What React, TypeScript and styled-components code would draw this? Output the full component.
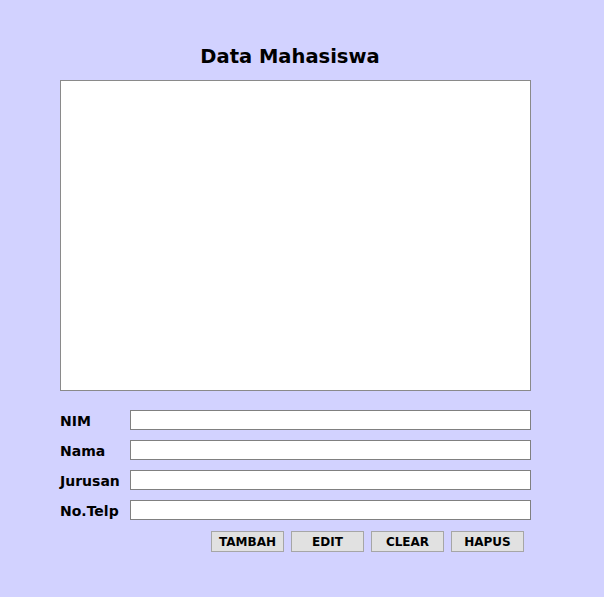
import React from "react";
import styled, { createGlobalStyle } from "styled-components";

const Global = createGlobalStyle`
  html, body { margin: 0; padding: 0; background: #d2d2ff; }
  body { font-family: "DejaVu Sans", Verdana, sans-serif; }
`;

const Page = styled.div`
  width: 604px;
  height: 597px;
  background: #d2d2ff;
  padding: 42px 0 0 60px;
  box-sizing: border-box;
`;

const Title = styled.h1`
  margin: 0;
  width: 460px;
  text-align: center;
  font-size: 19.5px;
  font-weight: bold;
  color: #000;
  line-height: 29px;
  height: 38px;
`;

const TableBox = styled.div`
  width: 471px;
  height: 311px;
  box-sizing: border-box;
  background: #fff;
  border: 1px solid #8a8a8a;
`;

const Form = styled.div`
  display: flex;
  flex-direction: column;
  gap: 10px;
  margin-top: 19px;
`;

const Row = styled.div`
  display: flex;
  align-items: center;
  height: 20px;
`;

const Label = styled.label`
  width: 70px;
  font-size: 14px;
  font-weight: bold;
  color: #000;
  padding-top: 2px;
`;

const Input = styled.input`
  width: 401px;
  height: 20px;
  box-sizing: border-box;
  border: 1px solid #808080;
  background: #fff;
  margin: 0;
  padding: 0 3px;
`;

const Buttons = styled.div`
  display: flex;
  gap: 7px;
  margin: 11px 0 0 151px;
`;

const Button = styled.button`
  width: 73px;
  height: 21px;
  box-sizing: border-box;
  border: 1px solid #a6a6a6;
  background: #e1e1e1;
  font-family: "DejaVu Sans", Verdana, sans-serif;
  font-size: 12px;
  font-weight: bold;
  color: #000;
  padding: 1px 0 0;
  margin: 0;
`;

const fields = ["NIM", "Nama", "Jurusan", "No.Telp"];
const actions = ["TAMBAH", "EDIT", "CLEAR", "HAPUS"];

export default function App() {
  return (
    <>
      <Global />
      <Page>
        <Title>Data Mahasiswa</Title>
        <TableBox />
        <Form>
          {fields.map((f) => (
            <Row key={f}>
              <Label>{f}</Label>
              <Input />
            </Row>
          ))}
        </Form>
        <Buttons>
          {actions.map((a) => (
            <Button key={a}>{a}</Button>
          ))}
        </Buttons>
      </Page>
    </>
  );
}
